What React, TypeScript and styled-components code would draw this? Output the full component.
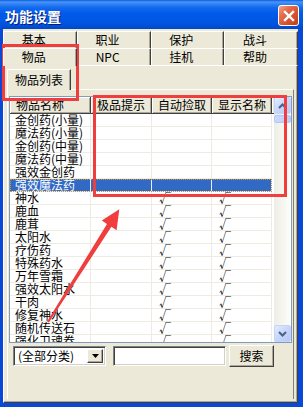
import React from 'react';
import styled, { createGlobalStyle } from 'styled-components';

const FONT = `"Noto Sans CJK SC", "Noto Sans", "Liberation Sans", sans-serif`;

const GlobalStyle = createGlobalStyle`
    * { box-sizing: border-box; }
    html, body { margin: 0; padding: 0; background: #ffffff; }
    body { font-family: ${FONT}; font-size: 12px; }
`;

const tabRows = [
    ['基本', '职业', '保护', '战斗'],
    ['物品', 'NPC', '挂机', '帮助'],
];

const columns = ['物品名称', '极品提示', '自动捡取', '显示名称'];

const items = [
    '金创药(小量)',
    '魔法药(小量)',
    '金创药(中量)',
    '魔法药(中量)',
    '强效金创药',
    '强效魔法药',
    '神水',
    '鹿血',
    '鹿茸',
    '太阳水',
    '疗伤药',
    '特殊药水',
    '万年雪霜',
    '强效太阳水',
    '干肉',
    '修复神水',
    '随机传送石',
    '强化卫魂卷',
];

const SELECTED = 5;

export default function App() {
    return (
        <>
            <GlobalStyle />
            <Window>
                <TitleBar>
                    <Title>功能设置</Title>
                    <CloseButton>
                        <svg width="12" height="12" viewBox="0 0 12 12">
                            <path d="M2 2 L10 10 M10 2 L2 10" stroke="#fff" strokeWidth="2.4" strokeLinecap="square" />
                        </svg>
                    </CloseButton>
                </TitleBar>
                <Client>
                    {tabRows.map((row, r) => (
                        <TabRow key={r}>
                            {row.map((t) => (
                                <Tab key={t} $active={t === '物品'}>
                                    {t}
                                </Tab>
                            ))}
                        </TabRow>
                    ))}
                    <Panel>
                        <InnerTab>物品列表</InnerTab>
                        <InnerPage>
                            <ListView>
                                <ListBody>
                                    <Header>
                                        {columns.map((c) => (
                                            <HeaderCell key={c}>{c}</HeaderCell>
                                        ))}
                                        <HeaderFill />
                                    </Header>
                                    {items.map((name, i) => (
                                        <Row key={name} $selected={i === SELECTED}>
                                            <Cell $selected={i === SELECTED}>{name}</Cell>
                                            <Cell $selected={i === SELECTED} />
                                            <Cell $selected={i === SELECTED} $check>
                                                {i > SELECTED ? '√' : ''}
                                            </Cell>
                                            <Cell $selected={i === SELECTED} $check>
                                                {i > SELECTED ? '√' : ''}
                                            </Cell>
                                        </Row>
                                    ))}
                                </ListBody>
                                <ScrollBar>
                                    <ScrollButton>
                                        <svg width="9" height="6" viewBox="0 0 9 6">
                                            <path d="M1 5 L4.5 1.5 L8 5" stroke="#4d6185" strokeWidth="2" fill="none" />
                                        </svg>
                                    </ScrollButton>
                                    <Thumb />
                                    <Track />
                                    <ScrollButton>
                                        <svg width="9" height="6" viewBox="0 0 9 6">
                                            <path d="M1 1 L4.5 4.5 L8 1" stroke="#4d6185" strokeWidth="2" fill="none" />
                                        </svg>
                                    </ScrollButton>
                                </ScrollBar>
                            </ListView>
                            <Controls>
                                <Combo>
                                    <ComboText>(全部分类)</ComboText>
                                    <DropButton>
                                        <svg width="7" height="4" viewBox="0 0 7 4">
                                            <path d="M0 0 H7 L3.5 4 Z" fill="#000" />
                                        </svg>
                                    </DropButton>
                                </Combo>
                                <EditBox />
                                <PushButton>搜索</PushButton>
                            </Controls>
                        </InnerPage>
                    </Panel>
                </Client>

                <Mark $x={2} $y={44} $w={77} $h={57} />
                <Mark $x={93} $y={95} $w={194} $h={102} />
                <ArrowLayer width="303" height="407" viewBox="0 0 303 407">
                    <polygon
                        points="119.3,209.3 116.6,230.2 111.4,226.8 48.9,322.6 47.1,321.4 107.0,224.0 101.8,220.6"
                        fill="#f03e3e"
                    />
                </ArrowLayer>
            </Window>
        </>
    );
}

const Window = styled.div`
    position: relative;
    width: 303px;
    height: 407px;
    display: flex;
    flex-direction: column;
    background: #0a48d8;
    font-family: ${FONT};
    font-size: 12px;
    color: #000;
    overflow: hidden;
`;

const TitleBar = styled.div`
    flex: none;
    height: 29px;
    display: flex;
    align-items: center;
    justify-content: space-between;
    padding: 0 4px 0 5px;
    background: linear-gradient(
        to bottom,
        #0a5de8 0px,
        #4a95f6 2px,
        #3282f4 4px,
        #1068ee 8px,
        #005ae8 14px,
        #0056e2 22px,
        #0050d8 26px,
        #0046c6 29px
    );
`;

const Title = styled.span`
    padding-top: 2px;
    color: #fff;
    font-size: 14px;
    font-weight: bold;
    line-height: 14px;
    text-shadow: 1px 1px 0 #0a1e78;
`;

const CloseButton = styled.div`
    width: 21px;
    height: 21px;
    margin-top: 2px;
    display: flex;
    align-items: center;
    justify-content: center;
    border: 1px solid #fff;
    border-radius: 3px;
    background: linear-gradient(135deg, #f2a58c 0%, #e66e4e 30%, #d8502c 65%, #c23c1a 100%);
`;

const Client = styled.div`
    flex: 1;
    display: flex;
    flex-direction: column;
    margin: 0 5px 4px 3px;
    padding-top: 2px;
    background: #ece9d8;
`;

const TabRow = styled.div`
    display: grid;
    grid-template-columns: repeat(4, 1fr);
    height: 17px;
`;

const Tab = styled.div<{ $active?: boolean }>`
    position: relative;
    z-index: ${(p) => (p.$active ? 1 : 0)};
    display: flex;
    align-items: center;
    justify-content: center;
    padding-right: 12px;
    padding-bottom: ${(p) => (p.$active ? '2px' : '0')};
    margin-bottom: ${(p) => (p.$active ? '-1px' : '0')};
    background: #ece9d8;
    border-top: 1px solid #fff;
    border-left: 1px solid #fff;
    border-right: 1px solid #404040;
    box-shadow: inset -1px 0 #aca899;
    line-height: 12px;
`;

const Panel = styled.div`
    flex: 1;
    display: flex;
    flex-direction: column;
    padding: 3px 3px 3px 3px;
    border-top: 1px solid #fff;
    border-left: 1px solid #fff;
    border-right: 1px solid #404040;
    border-bottom: 1px solid #404040;
    box-shadow: inset -1px -1px #aca899;
`;

const InnerTab = styled.div`
    position: relative;
    z-index: 1;
    align-self: flex-start;
    width: 64px;
    height: 21px;
    margin-bottom: -1px;
    display: flex;
    align-items: center;
    justify-content: center;
    padding-bottom: 1px;
    background: #ece9d8;
    border-top: 1px solid #fff;
    border-left: 1px solid #fff;
    border-right: 1px solid #404040;
    box-shadow: inset -1px 0 #aca899;
    line-height: 12px;
`;

const InnerPage = styled.div`
    flex: 1;
    display: flex;
    flex-direction: column;
    gap: 2px;
    padding: 6px 1px 0 1px;
    border-top: 1px solid #fff;
    border-left: 1px solid #fff;
    border-right: 1px solid #808080;
`;

const ListView = styled.div`
    flex: none;
    height: 247px;
    display: flex;
    border: 1px solid #7f9db9;
    background: #fff;
    overflow: hidden;
`;

const ListBody = styled.div`
    flex: 1;
    display: flex;
    flex-direction: column;
    overflow: hidden;
`;

const Header = styled.div`
    flex: none;
    display: grid;
    grid-template-columns: 81px 61px 60px 60px 1fr;
    height: 17px;
`;

const HeaderCell = styled.div`
    display: flex;
    align-items: center;
    padding-left: 6px;
    background: #ece9d8;
    border-right: 1px solid #404040;
    border-bottom: 1px solid #404040;
    box-shadow: inset 1px 1px #fff, inset -1px -1px #aca899;
    line-height: 12px;
    white-space: nowrap;
`;

const HeaderFill = styled.div`
    background: #ece9d8;
    border-bottom: 1px solid #404040;
    box-shadow: inset 1px 1px #fff;
`;

const Row = styled.div<{ $selected?: boolean }>`
    flex: none;
    display: grid;
    grid-template-columns: 81px 61px 60px 60px;
    width: 262px;
    height: 13px;
    outline: ${(p) => (p.$selected ? '1px dotted #ce953a' : 'none')};
    outline-offset: -1px;
`;

const Cell = styled.div<{ $selected?: boolean; $check?: boolean }>`
    display: flex;
    align-items: center;
    padding-left: ${(p) => (p.$check ? '7px' : '5px')};
    background: ${(p) => (p.$selected ? '#316ac5' : '#fff')};
    color: ${(p) => (p.$selected ? '#fff' : '#000')};
    border-right: 1px solid ${(p) => (p.$selected ? '#e8eefa' : '#eeece2')};
    border-bottom: 1px solid #eeece2;
    font-size: 12px;
    line-height: 12px;
    white-space: nowrap;
`;

const ScrollBar = styled.div`
    flex: none;
    width: 17px;
    display: flex;
    flex-direction: column;
    background: linear-gradient(to right, #eeede5, #fdfdfa);
`;

const ScrollButton = styled.div`
    flex: none;
    height: 17px;
    display: flex;
    align-items: center;
    justify-content: center;
    border: 1px solid #c3d3fd;
    border-radius: 2px;
    background: linear-gradient(135deg, #e4ecfe 0%, #c9d8fc 45%, #b5c9f6 100%);
`;

const Thumb = styled.div`
    flex: none;
    height: 8px;
    margin-top: 1px;
    border: 1px solid #b3c7f6;
    border-radius: 2px;
    background: linear-gradient(to right, #cbdafc, #bacdf8);
`;

const Track = styled.div`
    flex: 1;
`;

const Controls = styled.div`
    display: flex;
    align-items: center;
    height: 22px;
    padding-left: 4px;
`;

const sunken = `
    border-top: 1px solid #808080;
    border-left: 1px solid #808080;
    border-right: 1px solid #fff;
    border-bottom: 1px solid #fff;
    box-shadow: inset 1px 1px #404040, inset -1px -1px #d4d0c8;
`;

const Combo = styled.div`
    width: 93px;
    height: 20px;
    display: flex;
    align-items: stretch;
    padding: 2px;
    background: #fff;
    ${sunken}
`;

const ComboText = styled.span`
    flex: 1;
    display: flex;
    align-items: center;
    padding-left: 2px;
    line-height: 12px;
    white-space: nowrap;
`;

const DropButton = styled.div`
    width: 16px;
    display: flex;
    align-items: center;
    justify-content: center;
    background: #ece9d8;
    border-top: 1px solid #fff;
    border-left: 1px solid #fff;
    border-right: 1px solid #404040;
    border-bottom: 1px solid #404040;
    box-shadow: inset -1px -1px #aca899;
`;

const EditBox = styled.div`
    width: 113px;
    height: 20px;
    margin-left: 7px;
    background: #fff;
    ${sunken}
`;

const PushButton = styled.div`
    width: 45px;
    height: 22px;
    margin-left: 3px;
    display: flex;
    align-items: center;
    justify-content: center;
    background: #ece9d8;
    border-top: 1px solid #fff;
    border-left: 1px solid #fff;
    border-right: 1px solid #404040;
    border-bottom: 1px solid #404040;
    box-shadow: inset -1px -1px #aca899;
    line-height: 12px;
`;

////////////////////////////////////////////////////

const Mark = styled.div<{ $x: number; $y: number; $w: number; $h: number }>`
    position: absolute;
    left: ${(p) => p.$x}px;
    top: ${(p) => p.$y}px;
    width: ${(p) => p.$w}px;
    height: ${(p) => p.$h}px;
    border: 3px solid #f03e3e;
    pointer-events: none;
`;

const ArrowLayer = styled.svg`
    position: absolute;
    left: 0;
    top: 0;
    pointer-events: none;
`;
